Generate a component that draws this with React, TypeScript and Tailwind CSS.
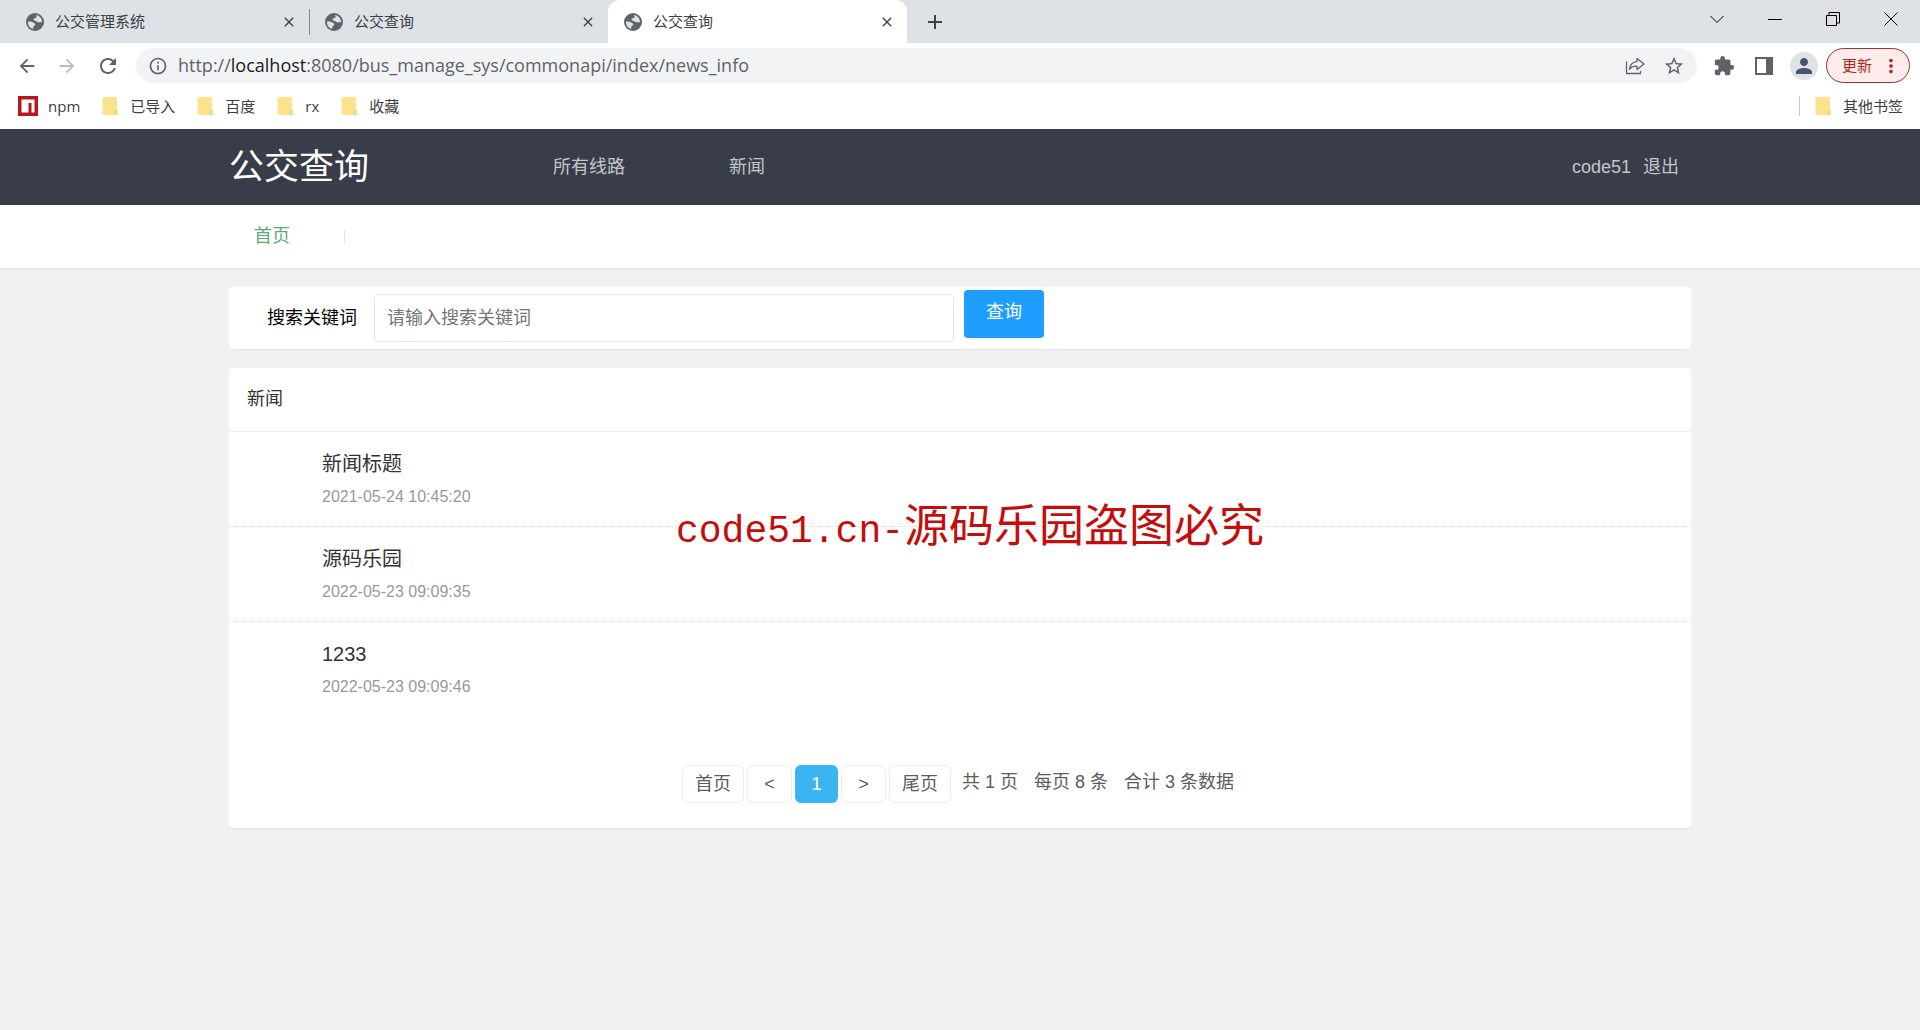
import React, { useState } from 'react';
import { MdArrowBack, MdArrowForward, MdRefresh, MdStarBorder, MdExtension, MdPerson, MdMoreVert, MdInfoOutline, MdAdd, MdClose } from 'react-icons/md';

const GlobeIcon = () => (
  <svg viewBox="0 0 18 18" className="w-[18px] h-[18px] shrink-0">
    <circle cx="9" cy="9" r="9" fill="#5f6368" />
    <path
      d="M1.900 8.800C3.500 8.400 6 8.600 7.200 9.600C8.200 10.400 9.400 10.200 9.300 11.400C9.200 12.600 7.400 12.600 7.300 14L7.200 16A7.200 7.200 0 0 1 1.900 8.800ZM10 1.900A7.200 7.200 0 0 1 16.100 8.800C15.600 9.800 14.400 9 13.200 9.300C11.600 9.600 11 8.300 9.400 8C7.600 7.600 7 6.600 8 5.600C9 4.700 10.400 5.300 10.600 4C10.700 3.200 10 2.800 10 1.900Z"
      fill="#dee1e6"
    />
  </svg>
);

const FolderIcon = () => (
  <svg viewBox="0 0 18 20" className="w-[18px] h-5 shrink-0">
    <path d="M2.500 1H14.500a1.500 1.500 0 0 1 1.500 1.500V13L17 14.500V18a1 1 0 0 1-1 1H2.500a1 1 0 0 1-1-1V2a1 1 0 0 1 1-1Z" fill="#fbe38d" />
    <path d="M13.500 18.500v-3a1.200 1.200 0 0 1 2.400 0v3Z" fill="#fbe38d" stroke="#ecd071" strokeWidth=".8" />
  </svg>
);

const NpmIcon = () => (
  <svg viewBox="0 0 20 20" className="w-5 h-5 shrink-0">
    <path d="M0 0h20v20H0z" fill="#b8161a" />
    <path d="M3.500 3.500h13v13h-3V7h-3v9.500h-7z" fill="#fff" />
  </svg>
);

const ShareIcon = () => (
  <svg viewBox="0 0 20 20" className="w-5 h-5" fill="none" stroke="#5f6368" strokeWidth="1.3">
    <path d="M1.500 5.500v12h14V15" />
    <path d="M12 2.500l7 5.500-7 5.500V10.200C8.500 10 6 11 4.500 13.500 5 9 7.500 6 12 5.700Z" strokeLinejoin="round" />
  </svg>
);

const SidePanelIcon = () => (
  <svg viewBox="0 0 18 18" className="w-[18px] h-[18px]">
    <path d="M0 0h18v18H0zM2 2v14h9V2z" fill="#5f6368" fillRule="evenodd" />
  </svg>
);

const tabs = [
  { title: '公交管理系统', active: false },
  { title: '公交查询', active: false },
  { title: '公交查询', active: true },
];

const bookmarks = ['已导入', '百度', 'rx', '收藏'];

const news = [
  { title: '新闻标题', date: '2021-05-24 10:45:20' },
  { title: '源码乐园', date: '2022-05-23 09:09:35' },
  { title: '1233', date: '2022-05-23 09:09:46' },
];

const TabStrip = () => (
  <div className="flex justify-between h-[43px] bg-[#dee1e6] text-[#3c4043]">
    <div className="flex">
      {tabs.map((tab, i) => (
        <div
          key={i}
          className={
            tab.active
              ? 'flex items-center w-[299px] pl-4 pr-3 bg-white rounded-t-xl'
              : i === 0
                ? 'flex items-center w-[310px] pl-[26px]'
                : 'flex items-center w-[298px] pl-[15px] pr-3'
          }
        >
          <GlobeIcon />
          <span className="ml-[11px] flex-1 text-[15px]">{tab.title}</span>
          <button aria-label="关闭标签页"><MdClose className="w-4 h-4" /></button>
          {i === 0 && <span className="w-px h-[26px] ml-3 bg-[#85888c]" />}
        </div>
      ))}
      <button aria-label="新标签页" className="ml-4"><MdAdd className="w-6 h-6" /></button>
    </div>
    <div className="flex items-center gap-11 pr-[22px] pb-[6px] text-black">
      <button aria-label="搜索标签页">
        <svg viewBox="0 0 14 14" className="w-[14px] h-[14px]" fill="none" stroke="currentColor"><path d="M.5 4L7 10.500 13.500 4" /></svg>
      </button>
      <button aria-label="最小化">
        <svg viewBox="0 0 14 14" className="w-[14px] h-[14px]" fill="none" stroke="currentColor"><path d="M0 7.500h14" /></svg>
      </button>
      <button aria-label="还原">
        <svg viewBox="0 0 14 14" className="w-[14px] h-[14px]" fill="none" stroke="currentColor"><path d="M.5 3.500h10v10H.5zM3 3.500v-3h10.500V11h-3" /></svg>
      </button>
      <button aria-label="关闭">
        <svg viewBox="0 0 14 14" className="w-[14px] h-[14px]" fill="none" stroke="currentColor"><path d="M.5.5l13 13M13.500.5l-13 13" /></svg>
      </button>
    </div>
  </div>
);

const Toolbar = () => (
  <div className="flex items-center h-[45px] pl-4 pr-[10px] bg-white text-[#5f6368]">
    <button aria-label="后退"><MdArrowBack className="w-[22px] h-[22px]" /></button>
    <button aria-label="前进" className="ml-[18px] text-[#b9bbbe]"><MdArrowForward className="w-[22px] h-[22px]" /></button>
    <button aria-label="刷新" className="ml-[18px]"><MdRefresh className="w-6 h-6" /></button>
    <div className="flex items-center flex-1 h-[35px] ml-4 pl-3 pr-3 rounded-full bg-[#f1f3f4]">
      <MdInfoOutline className="w-5 h-5" />
      <div className="flex-1 ml-[10px] text-[18px] font-['Open_Sans','Noto_Sans',sans-serif]">
        http://<span className="text-[#202124]">localhost</span>:8080/bus_manage_sys/commonapi/index/news_info
      </div>
      <button aria-label="分享"><ShareIcon /></button>
      <button aria-label="收藏此页" className="ml-[18px]"><MdStarBorder className="w-[22px] h-[22px]" /></button>
    </div>
    <button aria-label="扩展程序" className="ml-4"><MdExtension className="w-[22px] h-[22px]" /></button>
    <button aria-label="侧边栏" className="ml-5"><SidePanelIcon /></button>
    <button aria-label="用户" className="flex items-center justify-center w-7 h-7 ml-[17px] rounded-full bg-[#dee1e6] text-[#46536b]">
      <MdPerson className="w-6 h-6" />
    </button>
    <button className="flex items-center h-[35px] w-[84px] ml-2 pl-[15px] rounded-full border border-[#a5302b] bg-[#fdeceb] text-[#b3261e] text-[15px]">
      更新
      <MdMoreVert className="w-[22px] h-[22px] ml-2" />
    </button>
  </div>
);

const BookmarkBar = () => (
  <div className="flex items-center justify-between h-[41px] pb-[5px] pl-[18px] pr-[17px] bg-white text-[15px] text-[#3c4043]">
    <div className="flex items-center gap-[21px]">
      <a href="#" className="flex items-center gap-[10px]"><NpmIcon />npm</a>
      {bookmarks.map((name) => (
        <a key={name} href="#" className="flex items-center gap-[11px]"><FolderIcon />{name}</a>
      ))}
    </div>
    <div className="flex items-center">
      <span className="w-px h-5 mr-[14px] bg-[#c4c7cc]" />
      <a href="#" className="flex items-center gap-[11px]"><FolderIcon />其他书签</a>
    </div>
  </div>
);

const pageButton = 'flex items-center h-[38px] px-3 rounded-md border border-[#ececec] bg-white';

const App: React.FC = () => {
  const [keyword, setKeyword] = useState('');

  return (
    <div className="relative min-h-screen bg-[#f1f1f1] font-['Liberation_Sans','Noto_Sans_CJK_SC',sans-serif]">
      <div className="font-['Open_Sans','Noto_Sans_CJK_SC',sans-serif]">
        <TabStrip />
        <Toolbar />
        <BookmarkBar />
      </div>

      <header className="h-[76px] bg-[#393d49]">
        <div className="flex items-center h-full max-w-[1462px] mx-auto text-[18px] text-[#c4c5c9]">
          <h1 className="text-[35px] text-white">公交查询</h1>
          <nav className="flex flex-1 gap-[104px] ml-[184px]">
            <a href="#">所有线路</a>
            <a href="#">新闻</a>
          </nav>
          <div className="flex gap-3 pr-3">
            <a href="#">code51</a>
            <a href="#">退出</a>
          </div>
        </div>
      </header>

      <div className="h-[63px] bg-white shadow-2xs">
        <div className="flex items-center h-full max-w-[1462px] mx-auto pl-[25px] text-[18px]">
          <a href="#" className="text-[#5fa875]">首页</a>
          <span className="w-px h-[13px] ml-[54px] bg-[#e2e2e2]" />
        </div>
      </div>

      <main className="max-w-[1462px] mx-auto py-[19px] text-[18px]">
        <form className="flex items-start h-[62px] rounded-sm bg-white shadow-2xs" onSubmit={(e) => e.preventDefault()}>
          <label htmlFor="keyword" className="mt-[7px] pl-[38px] leading-[48px] text-black">搜索关键词</label>
          <input
            id="keyword"
            value={keyword}
            onChange={(e) => setKeyword(e.target.value)}
            placeholder="请输入搜索关键词"
            className="w-[580px] h-12 mt-[7px] ml-[17px] px-3 border border-[#e6e6e6] rounded-sm bg-white placeholder:text-[#757575]"
          />
          <button className="w-20 h-12 mt-[3px] ml-[10px] pb-[3px] rounded-sm bg-[#1e9fff] text-white">查询</button>
        </form>

        <section className="mt-[19px] pb-[25px] rounded-sm bg-white shadow-2xs">
          <h2 className="h-16 pl-[18px] leading-[62px] border-b border-[#f0f0f0] text-[#333]">新闻</h2>
          <ul>
            {news.map((item) => (
              <li key={item.date} className="h-[95px] pt-4 pl-[93px] border-b border-dotted border-[#e2e2e2] last:border-0">
                <a href="#" className="block text-[20px] leading-8 text-[#333]">{item.title}</a>
                <p className="mt-0.5 text-base leading-[30px] text-[#999]">{item.date}</p>
              </li>
            ))}
          </ul>
          <div className="flex justify-center gap-[3px] mt-12 pr-1 text-[#5c5c5c]">
            <button className={pageButton}>首页</button>
            <button className="flex items-center justify-center w-[45px] h-[38px] rounded-md border border-[#ececec] bg-white">&lt;</button>
            <button className="w-[43px] h-[38px] rounded-md bg-[#3bb4f2] text-white">1</button>
            <button className="flex items-center justify-center w-[45px] h-[38px] rounded-md border border-[#ececec] bg-white">&gt;</button>
            <button className={pageButton}>尾页</button>
            <div className="flex gap-4 ml-2 leading-[34px]">
              <span>共 1 页</span>
              <span>每页 8 条</span>
              <span>合计 3 条数据</span>
            </div>
          </div>
        </section>
      </main>

      <div className="absolute inset-x-0 top-[494px] flex items-baseline justify-center pl-5 pointer-events-none text-[45px] leading-[66px] text-[#c40d0d]">
        <span className="text-[38px] font-['Liberation_Mono',monospace]">code51.cn-</span>源码乐园盗图必究
      </div>
    </div>
  );
};

export default App;
